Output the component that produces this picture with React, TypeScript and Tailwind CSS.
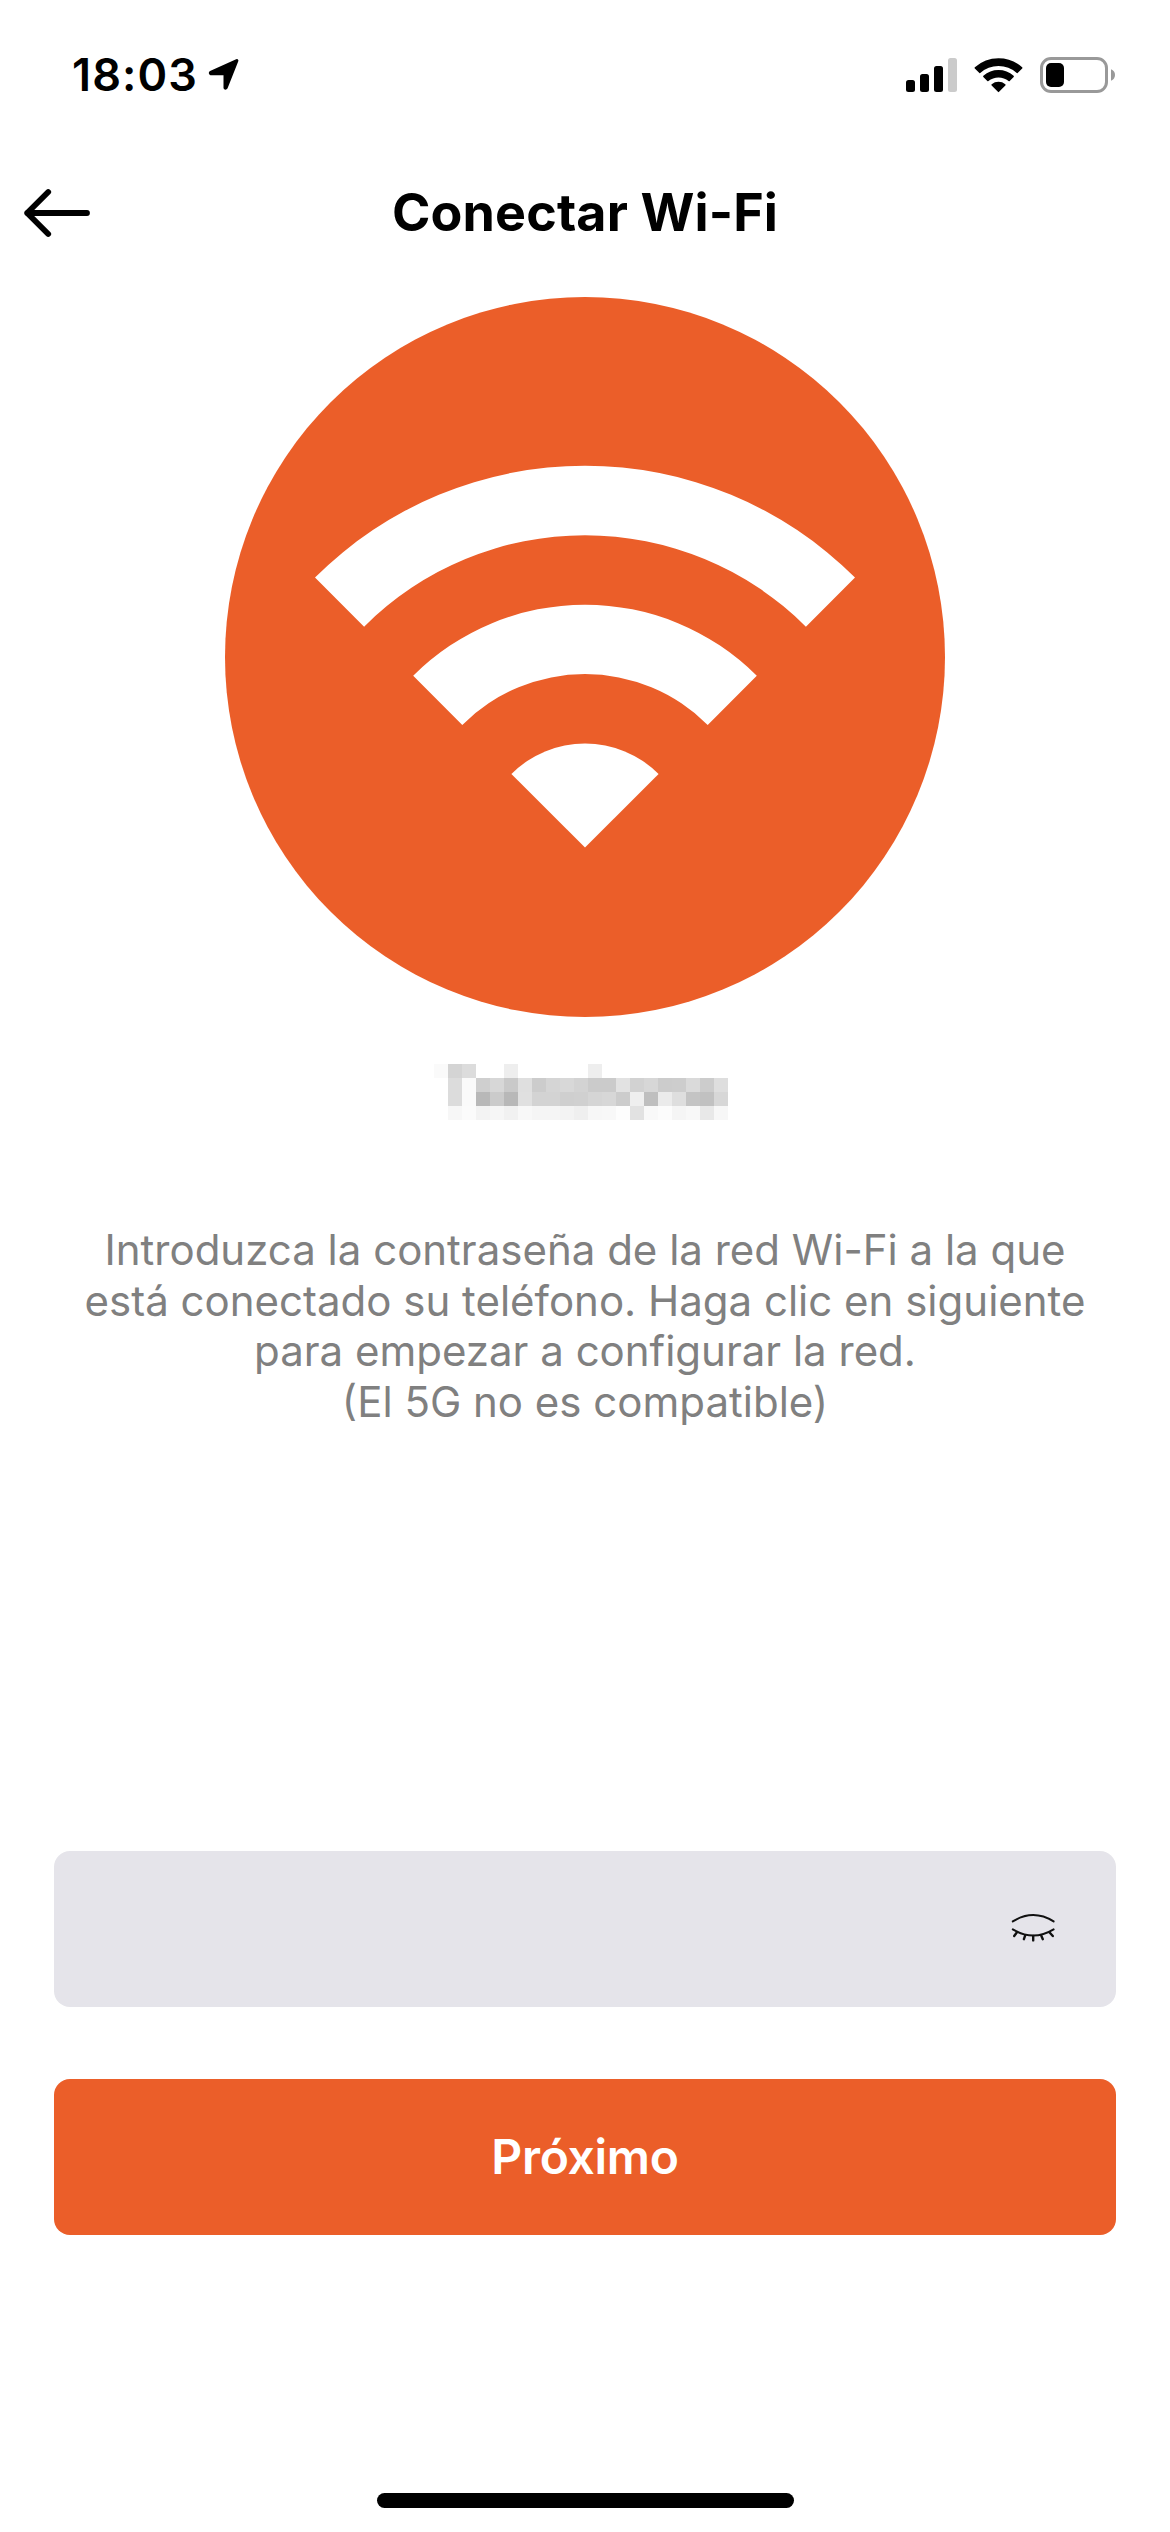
import React from "react";

// Grey levels (hex pairs) of the obscured network name, one string per row.
const MASK_ROWS = [
  "fa d4 dc ff ff ee ff ff ff ff ff ee ff ff ff ff ff ff ff ff ff",
  "ff dc fa cf d7 c9 df cc d5 d8 d3 cb cb e2 d2 d7 cc cd da cc de",
  "ff dc fa b8 cb b8 e0 d3 d3 cf d0 d5 d7 cc ef bf eb de c4 c1 d7",
  "ff f7 fb f3 f6 f1 f8 f5 f5 f3 ef f7 f8 fd e2 f9 fc f5 f8 e8 f7",
];

function LocationArrow() {
  return (
    <svg width="32" height="33" viewBox="208 57.5 32 33">
      <path
        d="M210.7 72 L236.8 60.2 L226 87.3 Q225.6 88 225.1 87.3 V73.2 H210.9 Q210 72.6 210.7 72 Z"
        fill="#000"
        stroke="#000"
        strokeWidth="3.2"
        strokeLinejoin="round"
      />
    </svg>
  );
}

function SignalIcon() {
  return (
    <svg width="51" height="36" viewBox="907 56 51 36">
      <rect x="907" y="79" width="9" height="12" rx="2.5" />
      <rect x="921" y="73" width="9" height="18" rx="2.5" />
      <rect x="935" y="65" width="9" height="26" rx="2.5" />
      <rect x="949" y="57" width="9" height="34" rx="2.5" fill="#cbcbcb" />
    </svg>
  );
}

function StatusWifiIcon() {
  return (
    <svg width="49" height="38" viewBox="-24.5 -36.5 49 38">
      <g stroke="#000" strokeWidth="1.6" strokeLinejoin="round">
        <path d="M-23.1 -24.6 A34.6 34.6 0 0 1 23.1 -24.6 L18.8 -20.2 A28.4 28.4 0 0 0 -18.8 -20.2 Z" />
        <path d="M-14.6 -16.1 A22 22 0 0 1 14.6 -16.1 L10.6 -12 A16.8 16.8 0 0 0 -10.6 -12 Z" />
        <path d="M-6.3 -7.6 A10 10 0 0 1 6.3 -7.6 L0 -1.2 Z" />
      </g>
    </svg>
  );
}

function BatteryIcon() {
  return (
    <svg width="75" height="36" viewBox="0 0 75 36">
      <rect x="1.5" y="1.5" width="65" height="33" rx="9.5" fill="none" stroke="#999" strokeWidth="3" />
      <rect x="6" y="6" width="18" height="24" rx="5" />
      <path d="M71 12.3 Q75 14 75 18 Q75 22 71 23.7 Z" fill="#999" />
    </svg>
  );
}

function BackArrow() {
  return (
    <svg
      width="66"
      height="50"
      viewBox="0 0 66 50"
      fill="none"
      stroke="#000"
      strokeWidth="5.8"
      strokeLinecap="round"
      strokeLinejoin="round"
    >
      <path d="M63 25 H3.2 M24.2 4 L3.2 25 L24.2 46" />
    </svg>
  );
}

function HeroWifi() {
  return (
    <svg width="720" height="720" viewBox="-360 -360 720 720">
      <circle r="360" fill="#eb5e29" />
      <g transform="translate(0 190.6)" fill="#fff">
        <path d="M-270 -270 A381.8 381.8 0 0 1 270 -270 L220.9 -220.9 A312.4 312.4 0 0 0 -220.9 -220.9 Z" />
        <path d="M-171.8 -171.8 A243 243 0 0 1 171.8 -171.8 L122.7 -122.7 A173.5 173.5 0 0 0 -122.7 -122.7 Z" />
        <path d="M-73.6 -73.6 A104.1 104.1 0 0 1 73.6 -73.6 L0 0 Z" />
      </g>
    </svg>
  );
}

function EyeClosedIcon() {
  return (
    <svg
      width="44"
      height="34"
      viewBox="1011 1912 44 34"
      fill="none"
      stroke="#111"
      strokeWidth="2"
      strokeLinecap="round"
    >
      <path d="M1012.8 1921.4 Q1033.2 1908.8 1053.6 1921.4" />
      <path d="M1012.8 1929.4 Q1033.2 1941.8 1053.6 1929.4" />
      <path
        d="M1017 1932.2 L1014.2 1936 M1025.3 1935.2 L1023.9 1939.2 M1033.2 1936 V1940.4 M1041.1 1935.2 L1042.8 1939.2 M1049.4 1932.2 L1052.8 1936"
        strokeWidth="2.4"
      />
    </svg>
  );
}

export default function App() {
  return (
    <div className="flex h-[2532px] w-[1170px] flex-col bg-white font-['Inter',sans-serif] text-black">
      <div className="flex h-[149px] shrink-0 items-center justify-between pr-[55px] pl-[72px]">
        <div className="flex items-center gap-[10px]">
          <span className="text-[45px] leading-[55px] font-semibold tracking-[1.1px]">18:03</span>
          <LocationArrow />
        </div>
        <div className="flex items-center gap-[17px]">
          <SignalIcon />
          <StatusWifiIcon />
          <BatteryIcon />
        </div>
      </div>

      <header className="grid h-[128px] shrink-0 grid-cols-[1fr_auto_1fr] items-center px-6">
        <button aria-label="Atrás" className="justify-self-start">
          <BackArrow />
        </button>
        <h1 className="text-[52px] leading-[64px] font-bold tracking-[0.14px] whitespace-nowrap">Conectar Wi-Fi</h1>
        <span />
      </header>

      <main className="flex flex-col items-center px-[54px] pt-5">
        <HeroWifi />

        <div className="mt-[47px] mr-[8px] grid grid-cols-[repeat(21,14px)] auto-rows-[14px]">
          {MASK_ROWS.flatMap((row, r) =>
            row.split(" ").map((v, c) => <div key={`${r}-${c}`} style={{ backgroundColor: `#${v}${v}${v}` }} />),
          )}
        </div>

        <p className="mt-[105px] h-[203px] text-center text-[42px] leading-[50.67px] whitespace-nowrap text-[#808080]">
          Introduzca la contraseña de la red Wi-Fi a la que
          <br />
          está conectado su teléfono. Haga clic en siguiente
          <br />
          para empezar a configurar la red.
          <br />
          (El 5G no es compatible)
        </p>

        <div className="mt-[423px] flex h-[156px] w-full items-center justify-end rounded-[16px] bg-[#e5e4ea] pr-[61px]">
          <EyeClosedIcon />
        </div>

        <button className="mt-[72px] flex h-[156px] w-full items-center justify-center rounded-[16px] bg-[#eb5e29] text-[48px] leading-[58px] font-semibold tracking-[-0.3px] text-white">
          Próximo
        </button>
      </main>

      <div className="mt-auto mb-6 h-[15px] w-[417px] shrink-0 self-center rounded-full bg-black" />
    </div>
  );
}
